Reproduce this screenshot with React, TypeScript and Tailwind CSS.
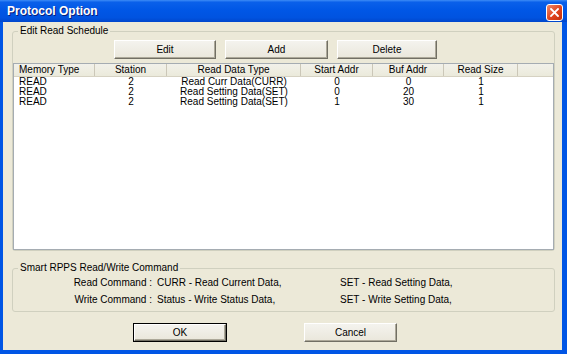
const font = "font-['Liberation_Sans',Arial,sans-serif]";

const columns = [
  { label: "Memory Type", cls: "w-[81px] justify-start pl-[5px]" },
  { label: "Station", cls: "w-[72px] justify-center" },
  { label: "Read Data Type", cls: "w-[134px] justify-center" },
  { label: "Start Addr", cls: "w-[72px] justify-center" },
  { label: "Buf Addr", cls: "w-[71px] justify-center" },
  { label: "Read Size", cls: "w-[74px] justify-center" },
];

const rows = [
  ["READ", "2", "Read Curr Data(CURR)", "0", "0", "1"],
  ["READ", "2", "Read Setting Data(SET)", "0", "20", "1"],
  ["READ", "2", "Read Setting Data(SET)", "1", "30", "1"],
];

function Button({ label, cls, isDefault }: { label: string; cls: string; isDefault?: boolean }) {
  return (
    <div className={`${cls} h-[19px] ${isDefault ? "border border-black" : ""}`}>
      <div className="flex h-full w-full items-center justify-center border-t border-l border-t-white border-l-white border-r border-b border-r-[#716F64] border-b-[#716F64] bg-[linear-gradient(to_bottom,#F4F3EE,#EAE7DB)] text-[10px] leading-none text-black shadow-[inset_-1px_-1px_0_#ACA899]">
        {label}
      </div>
    </div>
  );
}

export default function App() {
  return (
    <div className={`${font} h-[354px] w-[567px] overflow-hidden bg-[#0055E5]`}>
      {/* title bar */}
      <div className="flex h-[22px] items-center justify-between bg-[linear-gradient(to_bottom,#3D8CF6_0%,#0A60EA_10%,#0057E6_45%,#0053E0_80%,#0046CC_100%)] pl-[7px] pr-[4px]">
        <span className="text-[12px] font-bold text-white [text-shadow:1px_1px_0_#0A1E78]">Protocol Option</span>
        <div className="mt-[2px] flex h-[17px] w-[17px] items-center justify-center rounded-[3px] border border-white bg-[linear-gradient(135deg,#F08A6C,#E0431C_55%,#C4300C)]">
          <svg width="9" height="9" viewBox="0 0 9 9">
            <path d="M1 1 L8 8 M8 1 L1 8" stroke="white" strokeWidth="1.8" strokeLinecap="square" />
          </svg>
        </div>
      </div>

      {/* client area */}
      <div className="ml-[3px] mr-[5px] h-[328px] bg-[#ECE9D8] text-[10px] text-black">
        <div className="h-[3px]" />
        <fieldset className="ml-[9px] w-[543px] rounded-[3px] border border-[#D0D0BF] px-0 pt-[3px]">
          <legend className="ml-[5px] px-[2px] text-[10px] leading-[12px]">Edit Read Schedule</legend>
          <div className="flex gap-[9px] pl-[101px]">
            <Button label="Edit" cls="w-[102px]" />
            <Button label="Add" cls="w-[103px]" />
            <Button label="Delete" cls="w-[100px]" />
          </div>
          <div className="mt-[4px] h-[187px] border border-[#A5ACB2] bg-white">
            <div className="flex h-[13px] border-b border-[#D6D2C2] bg-[linear-gradient(to_bottom,#F2F1EA,#EBEADB)]">
              {columns.map((c) => (
                <div key={c.label} className={`${c.cls} flex items-center border-r border-[#CBC7B8] text-[10px] leading-none`}>
                  {c.label}
                </div>
              ))}
            </div>
            {rows.map((r, i) => (
              <div key={i} className="flex h-[10px] leading-[10px]">
                {r.map((v, j) => (
                  <div key={j} className={`${columns[j].cls} flex`}>
                    {v}
                  </div>
                ))}
              </div>
            ))}
          </div>
        </fieldset>

        <fieldset className="ml-[9px] mt-[11px] w-[543px] rounded-[3px] border border-[#D0D0BF] px-0 pb-[3px]">
          <legend className="ml-[5px] px-[2px] text-[10px] leading-[12px]">Smart RPPS Read/Write Command</legend>
          <div className="flex h-[17px] items-center">
            <span className="w-[139px] text-right">Read Command :</span>
            <span className="ml-[5px] w-[183px]">CURR - Read Current Data,</span>
            <span>SET - Read Setting Data,</span>
          </div>
          <div className="flex h-[17px] items-center">
            <span className="w-[139px] text-right">Write Command :</span>
            <span className="ml-[5px] w-[183px]">Status - Write Status Data,</span>
            <span>SET - Write Setting Data,</span>
          </div>
        </fieldset>

        <div className="mt-[11px] flex pl-[130px]">
          <Button label="OK" cls="w-[94px]" isDefault />
          <Button label="Cancel" cls="ml-[77px] w-[93px]" />
        </div>
      </div>
    </div>
  );
}
